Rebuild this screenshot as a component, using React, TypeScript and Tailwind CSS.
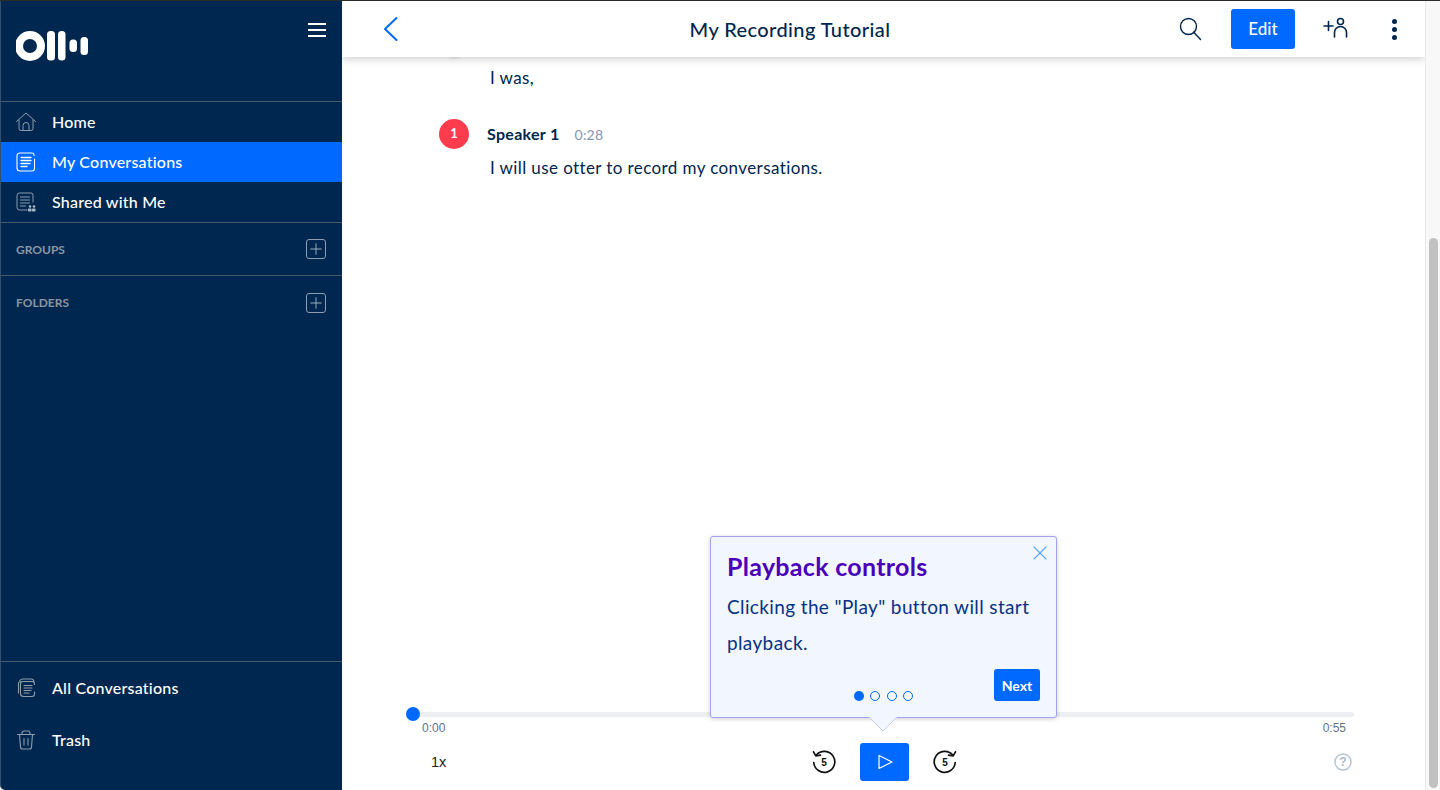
import {Plus, X} from "lucide-react";

const font = "font-['Lato','Noto_Sans',sans-serif]";

function Logo() {
    return (
        <svg width="74" height="32" viewBox="0 0 74 32" fill="#fff">
            <path fillRule="evenodd" d="M14 1a15 15 0 1 0 0 30 15 15 0 0 0 0-30zm0 8a7 7 0 1 1 0 14 7 7 0 0 1 0-14z"/>
            <rect x="31" y="1" width="8" height="29.5" rx="3.5"/>
            <rect x="42" y="1" width="7.5" height="29.5" rx="3.5"/>
            <rect x="53.5" y="9.5" width="7.5" height="12.5" rx="3.5"/>
            <rect x="64.500" y="7" width="7.500" height="18" rx="3.5"/>
        </svg>
    );
}

function HomeIcon() {
    return (
        <svg width="20" height="20" viewBox="0 0 20 20" fill="none" stroke="#8d9db0" strokeWidth="1" strokeLinecap="round" strokeLinejoin="round">
            <path d="M0.500 9.500 10 1l9.500 8.500"/>
            <path d="M3 8v8.500a2 2 0 0 0 2 2h10a2 2 0 0 0 2-2V8"/>
            <path d="M7 18.500v-5a3 3 0 0 1 6 0v5"/>
        </svg>
    );
}

function DocIcon({active}: {active?: boolean}) {
    const c = active ? "#fff" : "#8d9db0";
    return (
        <svg width="20" height="20" viewBox="0 0 20 20" fill="none" stroke={c} strokeWidth="1.100" strokeLinecap="round">
            <path d="M18 3.500V3a2 2 0 0 0-2-2H4a3 3 0 0 0-3 3v12a3 3 0 0 0 3 3h12a2.500 2.500 0 0 0 2.500-2.500V7"/>
            <path d="M5 5.500h10M5 8.500h10M5 11.500h9M5 14.500h6" strokeWidth="1.300"/>
        </svg>
    );
}

function SharedIcon() {
    return (
        <svg width="20" height="20" viewBox="0 0 20 20" fill="none" stroke="#8d9db0" strokeWidth="1" strokeLinecap="round">
            <path d="M17 10V3a2 2 0 0 0-2-2H3.500a2.500 2.500 0 0 0-2.500 2.500v12A2.500 2.500 0 0 0 3.500 18H11"/>
            <path d="M4.500 5h9M4.500 8h9M4.500 11h9M4.500 14h5"/>
            <g fill="#a9b6c4" stroke="none">
                <circle cx="14" cy="14.500" r="1.300"/>
                <circle cx="18" cy="14.500" r="1.300"/>
                <rect x="12" y="16.500" width="3.500" height="3" rx="0.700"/>
                <rect x="16" y="16.500" width="3.500" height="3" rx="0.700"/>
            </g>
        </svg>
    );
}

function AllIcon() {
    return (
        <svg width="20" height="20" viewBox="0 0 20 20" fill="none" stroke="#8d9db0" strokeWidth="1.100" strokeLinecap="round">
            <path d="M4 2.500A3 3 0 0 1 6.500 1H15a3 3 0 0 1 3 2.500"/>
            <path d="M2.500 15V5a2.500 2.500 0 0 1 2-1.500"/>
            <path d="M18.500 6.500V6a2.500 2.500 0 0 0-2.500-2.500H7A2.500 2.500 0 0 0 4.500 6v9.500A3 3 0 0 0 7.500 18.500H16a2.500 2.500 0 0 0 2.500-2.500v-2"/>
            <path d="M8 7.500h8M8 10h8M8 12.500h7M8 15h5"/>
        </svg>
    );
}

function TrashIcon() {
    return (
        <svg width="18" height="20" viewBox="0 0 18 20" fill="none" stroke="#8d9db0" strokeWidth="1.100" strokeLinecap="round">
            <path d="M0.500 4.500h17"/>
            <path d="M5 4.500V3a2 2 0 0 1 2-2h4a2 2 0 0 1 2 2v1.500"/>
            <path d="M2.500 4.500 3.500 17a2 2 0 0 0 2 2h7a2 2 0 0 0 2-2l1-12.500"/>
            <path d="M7 8.500v6.500M11 8.500v6.500"/>
        </svg>
    );
}

function NavRow({icon, label, active}: {icon: React.ReactNode; label: string; active?: boolean}) {
    return (
        <div className={`h-10 flex items-center pl-[15px] gap-4 text-white text-[16px] tracking-[0.22px] font-medium ${active ? "bg-[#0069ff]" : ""}`}>
            <span className="w-5 h-5 flex items-center justify-center shrink-0">{icon}</span>
            <span>{label}</span>
        </div>
    );
}

function SectionRow({label, last}: {label: string; last?: boolean}) {
    return (
        <div className={`h-[53px] flex items-center justify-between pl-[15px] pr-[16px] ${last ? "" : "border-b border-[#4a5a6b]"}`}>
            <span className="pt-[1px] text-[12px] font-bold text-[#8b96a3]">{label}</span>
            <span className="w-5 h-5 border border-[#8d9db0] rounded-[3px] flex items-center justify-center">
                <Plus size={18} strokeWidth={1.200} color="#a9b6c4"/>
            </span>
        </div>
    );
}

function SkipIcon({forward}: {forward?: boolean}) {
    return (
        <span className="relative w-6 h-6 flex items-center justify-center">
            <svg width="24" height="24" viewBox="0 0 24 24" fill="none" stroke="#111" strokeWidth="1.700" strokeLinecap="round" strokeLinejoin="round" className={forward ? "-scale-x-100" : ""}>
                <path d="M4.500 4.800A10.500 10.500 0 1 1 1.800 12.500"/>
                <path d="M1.500 1.800 3.800 5.800l4.700-.6"/>
            </svg>
            <span className="absolute inset-0 flex items-center justify-center text-[10px] font-bold text-[#111] font-['Liberation_Sans',sans-serif]">5</span>
        </span>
    );
}

function Sidebar() {
    return (
        <aside className="w-[342px] h-full shrink-0 bg-[#00274f] border-l border-[#33506f] rounded-bl-[5px] flex flex-col">
            <div className="h-[100px] relative pl-[15px] pt-[29px]">
                <Logo/>
                <div className="absolute right-[16px] top-[22px] w-[18px] flex flex-col gap-[4px]">
                    <span className="h-[2px] bg-white"/>
                    <span className="h-[2px] bg-white"/>
                    <span className="h-[2px] bg-white"/>
                </div>
            </div>
            <div className="border-t border-b border-[#4a5a6b]">
                <NavRow icon={<HomeIcon/>} label="Home"/>
                <NavRow icon={<DocIcon active/>} label="My Conversations" active/>
                <NavRow icon={<SharedIcon/>} label="Shared with Me"/>
            </div>
            <SectionRow label="GROUPS"/>
            <SectionRow label="FOLDERS" last/>
            <div className="flex-1"/>
            <div className="border-t border-[#4a5a6b] h-[129px] pt-[6px] flex flex-col gap-3">
                <NavRow icon={<AllIcon/>} label="All Conversations"/>
                <NavRow icon={<TrashIcon/>} label="Trash"/>
            </div>
        </aside>
    );
}

function Header() {
    return (
        <header className="relative z-10 h-[56px] shrink-0 bg-white shadow-[0_2px_8px_rgba(0,0,0,0.2)] flex items-center pl-[41px] pr-[27px]">
            <svg width="18" height="26" viewBox="0 0 18 26" fill="none" stroke="#0069ff" strokeWidth="2" strokeLinecap="round" strokeLinejoin="round">
                <path d="M13.500 2 2 13l11.500 11"/>
            </svg>
            <h1 className="flex-1 text-center text-[20px] font-medium text-[#00264d] tracking-[0.4px]">My Recording Tutorial</h1>
            <svg width="24" height="24" viewBox="0 0 24 24" fill="none" stroke="#00264d" strokeWidth="1.400" strokeLinecap="round">
                <circle cx="9.500" cy="9.500" r="8"/>
                <path d="M14.500 15 21.500 22.500"/>
            </svg>
            <button className="ml-[28px] w-16 h-10 rounded-[3px] bg-[#0069ff] text-white text-[17px] font-medium">Edit</button>
            <svg className="ml-[28px]" width="26" height="24" viewBox="0 0 26 24" fill="none" stroke="#00264d" strokeWidth="1.600" strokeLinecap="round">
                <path d="M1 9h9M5.500 4.500v9"/>
                <circle cx="17.500" cy="4.500" r="3"/>
                <path d="M11.500 20v-4.500a6 6 0 0 1 12 0V20"/>
            </svg>
            <div className="ml-[43px] w-[6px] flex flex-col gap-[3px]">
                <span className="w-[5px] h-[5px] rounded-full bg-[#00264d]"/>
                <span className="w-[5px] h-[5px] rounded-full bg-[#00264d]"/>
                <span className="w-[5px] h-[5px] rounded-full bg-[#00264d]"/>
            </div>
        </header>
    );
}

function Transcript() {
    return (
        <div className="flex-1 min-h-0 pl-[97px] text-[#00264d]">
            <div className="-mt-[14px] w-[30px] h-[16px] rounded-b-full bg-[#e3e5e8] opacity-60"/>
            <p className="ml-[51px] mt-[7px] text-[17px] tracking-[0.4px] leading-[24px]">I was,</p>
            <div className="mt-[29px] flex items-center h-[30px]">
                <span className="w-[30px] h-[30px] rounded-full bg-[#ff3b4e] text-white text-[13px] font-bold flex items-center justify-center">1</span>
                <span className="ml-[18px] text-[16px] tracking-[0.3px] font-bold">Speaker 1</span>
                <span className="ml-[15px] text-[14px] tracking-[0.2px] text-[#8496ab]">0:28</span>
            </div>
            <p className="ml-[51px] mt-[7px] text-[17px] tracking-[0.4px] leading-[24px]">I will use otter to record my conversations.</p>
        </div>
    );
}

function Player() {
    return (
        <div className="h-[85px] shrink-0 pl-[71px] pr-[71px] font-['Liberation_Sans',sans-serif]">
            <div className="relative h-[5px] mt-[7px] rounded-full bg-[#eceef1]">
                <span className="absolute -left-[7px] -top-[5px] w-[14px] h-[14px] rounded-full bg-[#0069ff]"/>
            </div>
            <div className="flex justify-between pl-[9px] pr-2 mt-[4px] text-[12px] leading-[14px] text-[#5f7389]">
                <span>0:00</span>
                <span>0:55</span>
            </div>
            <div className="grid grid-cols-[1fr_auto_1fr] items-center mt-[8px] h-[38px] pl-[2px]">
                <span className="pl-[16px] text-[14.500px] text-[#222] pt-[2px]">1x</span>
                <div className="flex items-center gap-6">
                    <SkipIcon/>
                    <button className="w-[49px] h-[38px] rounded-[3px] bg-[#0069ff] flex items-center justify-center">
                        <svg width="16" height="16" viewBox="0 0 16 16" fill="none" stroke="#fff" strokeWidth="1.200" strokeLinejoin="round">
                            <path d="M2 1.500v13L15 8z"/>
                        </svg>
                    </button>
                    <SkipIcon forward/>
                </div>
                <div className="flex justify-end pr-[2px]">
                    <span className="relative w-[18px] h-[18px] flex items-center justify-center text-[#a9bacc] text-[12px] font-bold">
                        <svg width="18" height="18" viewBox="0 0 18 18" fill="none" stroke="#b5c4d4" strokeWidth="1.500" className="absolute inset-0">
                            <circle cx="9" cy="9" r="8"/>
                        </svg>
                        ?
                    </span>
                </div>
            </div>
        </div>
    );
}

function Tooltip() {
    return (
        <div className="absolute z-20 left-[368px] bottom-[72px] w-[347px] h-[182px] rounded-[3px] border border-[#a5a3f0] bg-[#f2f6ff] shadow-[0_1px_4px_rgba(0,0,0,0.2)] pl-[16px]">
            <X size={24} strokeWidth={1.100} color="#5aa5ff" className="absolute right-[4px] top-[4px]"/>
            <h2 className="mt-[14px] text-[25px] tracking-[0.3px] leading-[30px] font-bold text-[#4a00b8]">Playback controls</h2>
            <p className="mt-[8px] w-[310px] text-[19px] tracking-[0.37px] leading-[36px] text-[#063286]">Clicking the "Play" button will start playback.</p>
            <div className="absolute left-[143px] bottom-[16px] flex gap-[6.300px]">
                <span className="w-[10px] h-[10px] rounded-full bg-[#0069ff]"/>
                <span className="w-[10px] h-[10px] rounded-full border border-[#0069ff]"/>
                <span className="w-[10px] h-[10px] rounded-full border border-[#0069ff]"/>
                <span className="w-[10px] h-[10px] rounded-full border border-[#0069ff]"/>
            </div>
            <button className="absolute right-4 bottom-4 w-[46px] h-[32px] rounded-[3px] bg-[#0069ff] text-white text-[14px] font-bold">Next</button>
            {/* pointer */}
            <svg className="absolute left-[157px] -bottom-[15px]" width="30" height="15" viewBox="0 0 30 15">
                <path d="M1 0 15 14 29 0" fill="#f2f6ff" stroke="#c9c8f5" strokeWidth="1"/>
                <rect x="2" y="0" width="26" height="1" fill="#f2f6ff"/>
            </svg>
        </div>
    );
}

export default function App() {
    return (
        <div className={`${font} w-[1440px] h-[790px] overflow-hidden bg-white flex flex-col`}>
            <div className="h-px bg-[#2b2b2b] shrink-0"/>
            <div className="flex-1 min-h-0 flex">
                <Sidebar/>
                <main className="relative flex-1 min-w-0 flex flex-col overflow-hidden">
                    <Header/>
                    <Transcript/>
                    <Player/>
                    <Tooltip/>
                </main>
                <div className="w-[15px] shrink-0 bg-[#f8f8f8] border-l border-[#e8e8e8] pt-[237px] pl-[3px]">
                    <div className="w-[9px] h-[550px] rounded-full bg-[#c1c1c1]"/>
                </div>
            </div>
        </div>
    );
}
